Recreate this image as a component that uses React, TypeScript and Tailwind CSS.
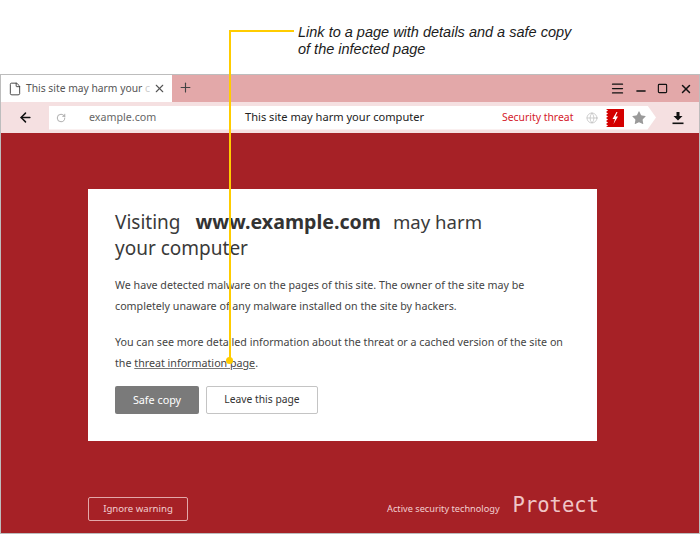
import React from "react";
import { ArrowLeft, File, Globe, Menu, Minus, Plus, RotateCw, Square, Star, X } from "lucide-react";

const ui = "font-['Noto_Sans','Open_Sans',sans-serif]";

function ShieldMark() {
  return (
    <svg width="18" height="18" viewBox="0 0 18 18" className="shrink-0">
      <path d="M0 0H18V18H0L2 16.5 0 15 2 13.5 0 12 2 10.5 0 9 2 7.5 0 6 2 4.5 0 3 2 1.5Z" fill="#d40000" />
      <path d="M10.5 3 6.5 10H9L7.5 15 12 7.5H9.5L11.5 3Z" fill="#fff" />
    </svg>
  );
}

function DownloadIcon() {
  return (
    <svg width="12" height="14" viewBox="0 0 12 14" className="shrink-0">
      <path d="M4.5 1H7.5V5H10.5L6 9.5 1.5 5H4.5Z" fill="#111" />
      <rect x="0.5" y="11.5" width="11" height="1.6" fill="#111" />
    </svg>
  );
}

export default function App() {
  return (
    <div className={`relative w-[700px] h-[534px] bg-white overflow-hidden ${ui}`}>
      {/* callout */}
      <div className="h-[74px] pl-[298px] pt-[24px] font-['Liberation_Sans',sans-serif] italic text-[14.5px] leading-[17px] text-[#1c1c1c]">
        <div>Link to a page with details and a safe copy</div>
        <div>of the infected page</div>
      </div>

      {/* browser */}
      <div className="h-[460px] flex flex-col border-t border-x border-b border-[#bdbdbd]">
        <div className="h-[27px] flex bg-[#e3a8a9] shrink-0">
          <div className="w-[171px] bg-white flex items-center pl-[7px] pr-[6px]">
            <File size={14} strokeWidth={1.5} className="text-[#333] shrink-0" />
            <span className="ml-[4px] pt-[1px] text-[10.3px] whitespace-nowrap text-[#555]">This site may harm your <span className="text-[#ccc]">c</span></span>
            <X size={13} strokeWidth={2} className="text-[#555] ml-auto shrink-0" />
          </div>
          <Plus size={15} strokeWidth={1.8} className="text-[#444] ml-[6px] mt-[5px]" />
          <div className="ml-auto flex items-center text-[#111] pr-[6px] gap-[9px]">
            <Menu size={15} strokeWidth={2} />
            <Minus size={14} strokeWidth={2.5} className="mt-[5px]" />
            <Square size={11} strokeWidth={2.5} />
            <X size={14} strokeWidth={2.5} className="ml-[2px]" />
          </div>
        </div>
        <div className="h-[31px] flex items-center bg-[#f5e0e1] shrink-0">
          <ArrowLeft size={15} strokeWidth={2.4} className="text-[#111] ml-[17px] shrink-0" />
          <div className="ml-[16px] w-[607px] h-[24px] bg-white flex items-center whitespace-nowrap shrink-0 [clip-path:polygon(0_0,98.6%_0,100%_50%,98.6%_100%,0_100%)]">
            <RotateCw size={10} strokeWidth={1.6} className="text-[#888] ml-[7px] shrink-0" />
            <span className="ml-[23px] w-[67px] shrink-0 text-[10.7px] text-[#666]">example.com</span>
            <span className="ml-[89px] w-[179px] shrink-0 text-[11.1px] text-[#222]">This site may harm your computer</span>
            <span className="ml-[78px] w-[71px] shrink-0 text-[10.4px] text-[#d4202a]">Security threat</span>
            <Globe size={12} strokeWidth={1.4} className="text-[#bbb] ml-[13px] shrink-0" />
            <div className="ml-[8px] shrink-0"><ShieldMark /></div>
            <Star size={16} fill="#9a9a9a" strokeWidth={0} className="ml-[7px] shrink-0" />
          </div>
          <div className="ml-[16px]"><DownloadIcon /></div>
        </div>

        <div className="flex-1 flex flex-col bg-[#a62126] pl-[87px] pr-[102px]">
          <div className="mt-[56px] h-[252px] bg-white pl-[27px] pt-[20px] text-[#444]">
            <div className="text-[19px] leading-[26px] text-[#3a3a3a]">
              <span>Visiting</span>
              <b className="ml-[15px] mr-[12px] text-[19.6px] font-bold text-[#333]">www.example.com</b>
              <span className="text-[18.6px]">may harm</span>
              <div>your computer</div>
            </div>
            <p className="mt-[14px] text-[10.7px] leading-[21px] w-[455px]">
              We have detected malware on the pages of this site. The owner of the site may be completely unaware of any malware installed on the site by hackers.
            </p>
            <p className="mt-[15px] text-[10.7px] leading-[21px] w-[455px]">
              You can see more detailed information about the threat or a cached version of the site on the <span className="underline decoration-[#777]">threat information page</span>.
            </p>
            <div className="mt-[12px] flex gap-[7px]">
              <div className="w-[84px] h-[28px] flex items-center justify-center rounded-[2px] bg-[#7a7a7a] text-white text-[10.8px]">Safe copy</div>
              <div className="w-[112px] h-[28px] flex items-center justify-center rounded-[2px] bg-white border border-[#c4c4c4] text-[#333] text-[10.3px]">Leave this page</div>
            </div>
          </div>
          <div className="mt-[56px] flex items-start justify-between">
            <div className="w-[100px] h-[24px] flex items-center justify-center rounded-[2px] border border-[#e3a8a9] text-[#f2cfd0] text-[9.6px]">Ignore warning</div>
            <div className="flex items-start -mr-[2px]">
              <span className="mt-[5px] text-[9.2px] text-[#f2cfd0]">Active security technology</span>
              <span className="ml-[13px] -mt-[2px] font-['DejaVu_Sans_Mono',monospace] text-[20.5px] leading-none text-[#f0c6c7]">Protect</span>
            </div>
          </div>
        </div>
      </div>

      {/* yellow leader line over the page */}
      <div className="absolute left-[230px] top-[30px] w-[64px] h-[2px] bg-[#ffcc00]" />
      <div className="absolute left-[229px] top-[30px] w-[2px] h-[330px] bg-[#ffcc00]" />
      <div className="absolute left-[226px] top-[357px] w-[7px] h-[7px] rounded-full bg-[#ffcc00]" />
    </div>
  );
}
